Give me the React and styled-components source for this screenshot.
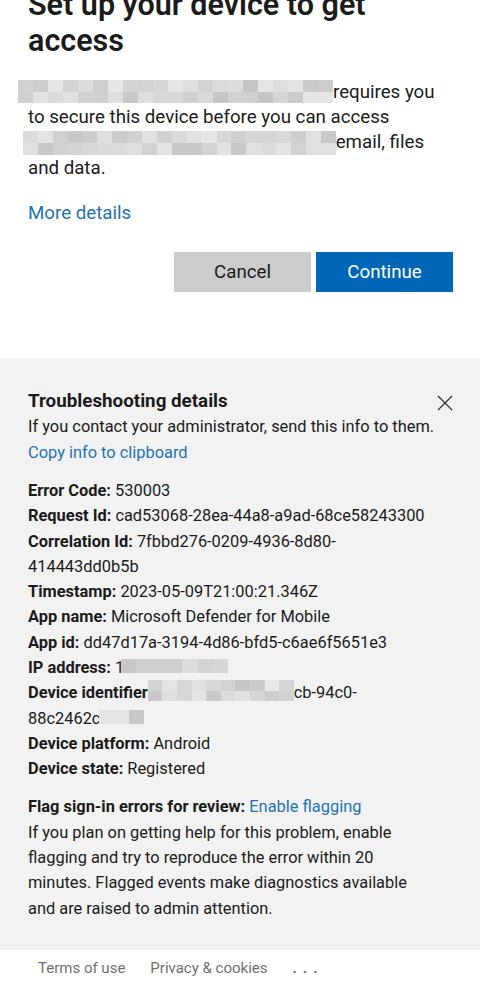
import styled, { createGlobalStyle } from "styled-components";

const GlobalStyle = createGlobalStyle`
  html, body {
    margin: 0;
    padding: 0;
    background: #ffffff;
  }
  body {
    font-family: Roboto, "Noto Sans", "Liberation Sans", sans-serif;
    color: #1b1b1b;
    -webkit-font-smoothing: antialiased;
  }
`;

// deterministic grey tones for the blurred (pixelated) parts of the shot
const tones = (count, seed) => {
  let s = seed;
  const out = [];
  for (let i = 0; i < count; i++) {
    s = (s * 9301 + 49297) % 233280;
    const v = 198 + Math.floor((s / 233280) * 34);
    out.push(`rgb(${v}, ${v}, ${v})`);
  }
  return out;
};

const Redacted = ({ cols, rows = 1, cell = 15, rowH = 14, align = "baseline", shift = 0, seed = 7 }) => (
  <Mosaic $cols={cols} $cell={cell} $rowH={rowH} $align={align} $shift={shift}>
    {tones(cols * rows, seed).map((c, i) => (
      <Tile key={i} $tone={c} />
    ))}
  </Mosaic>
);

const App = () => {
  return (
    <Page>
      <GlobalStyle />
      <Main>
        <Title>Set up your device to get access</Title>
        <Body>
          <Redacted cols={21} rows={2} rowH={11.5} align="top" shift={-10} seed={3} />
          requires you
          <br />
          to secure this device before you can access
          <br />
          <Redacted cols={21} rows={2} cell={14.9} rowH={12} align="text-top" shift={-5} seed={11} />
          email, files
          <br />
          and data.
        </Body>
        <MoreLink href="#">More details</MoreLink>
        <Actions>
          <Button>Cancel</Button>
          <Button $primary>Continue</Button>
        </Actions>
      </Main>

      <Panel>
        <PanelHeader>
          <PanelTitle>Troubleshooting details</PanelTitle>
          <Close aria-label="Close">
            <svg width="16" height="16" viewBox="0 0 16 16">
              <path d="M1 1L15 15M15 1L1 15" stroke="#333" strokeWidth="1.3" fill="none" />
            </svg>
          </Close>
        </PanelHeader>
        <Text>If you contact your administrator, send this info to them.</Text>
        <PanelLink href="#">Copy info to clipboard</PanelLink>

        <Details>
          <Text><b>Error Code:</b> 530003</Text>
          <Text><b>Request Id:</b> cad53068-28ea-44a8-a9ad-68ce58243300</Text>
          <Text>
            <b>Correlation Id:</b> 7fbbd276-0209-4936-8d80-
            <br />
            414443dd0b5b
          </Text>
          <Text><b>Timestamp:</b> 2023-05-09T21:00:21.346Z</Text>
          <Text><b>App name:</b> Microsoft Defender for Mobile</Text>
          <Text><b>App id:</b> dd47d17a-3194-4d86-bfd5-c6ae6f5651e3</Text>
          <Text>
            <b>IP address:</b> 1
            <Redacted cols={7} cell={15.3} rowH={14} shift={-3} seed={21} />
          </Text>
          <Text>
            <b>Device identifier</b>
            <Redacted cols={10} rows={2} cell={14.6} rowH={10.5} align="top" seed={5} />
            cb-94c0-
            <br />
            88c2462c
            <Redacted cols={3} cell={14.7} rowH={14} shift={-1} seed={17} />
          </Text>
          <Text><b>Device platform:</b> Android</Text>
          <Text><b>Device state:</b> Registered</Text>
        </Details>

        <Details>
          <Text>
            <b>Flag sign-in errors for review:</b> <InlineLink href="#">Enable flagging</InlineLink>
          </Text>
          <Text>
            If you plan on getting help for this problem, enable
            <br />
            flagging and try to reproduce the error within 20
            <br />
            minutes. Flagged events make diagnostics available
            <br />
            and are raised to admin attention.
          </Text>
        </Details>
      </Panel>

      <Footer>
        <FooterLink href="#">Terms of use</FooterLink>
        <FooterLink href="#">Privacy &amp; cookies</FooterLink>
        <Dots>...</Dots>
      </Footer>
    </Page>
  );
};

export default App;

const Page = styled.div`
  width: 480px;
  height: 981px;
  overflow: hidden;
  background: #ffffff;
`;

const Main = styled.div`
  margin-top: -13px;
  padding: 0 27px 0 28px;
`;

const Title = styled.h1`
  margin: 0;
  font-size: 30.5px;
  line-height: 36px;
  font-weight: 600;
  color: #1b1b1b;
`;

const Body = styled.p`
  margin: 21px 0 0;
  font-size: 18.7px;
  line-height: 25.2px;
  color: #1b1b1b;
`;

const Mosaic = styled.span`
  display: inline-grid;
  grid-template-columns: repeat(${(p) => p.$cols}, ${(p) => p.$cell}px);
  grid-auto-rows: ${(p) => p.$rowH}px;
  vertical-align: ${(p) => p.$align};
  margin-left: ${(p) => p.$shift}px;
`;

const Tile = styled.span`
  background: ${(p) => p.$tone};
`;

const MoreLink = styled.a`
  display: block;
  margin-top: 20px;
  font-size: 18.7px;
  line-height: 25.2px;
  color: #1f72b6;
  text-decoration: none;
`;

const Actions = styled.div`
  display: flex;
  justify-content: flex-end;
  gap: 5px;
  margin-top: 26px;
`;

const Button = styled.button`
  width: 137px;
  height: 40px;
  border: none;
  border-radius: 0;
  font-family: inherit;
  font-size: 18.7px;
  background: ${(p) => (p.$primary ? "#0067b8" : "#cccccc")};
  color: ${(p) => (p.$primary ? "#ffffff" : "#1b1b1b")};
  cursor: pointer;
`;

const Panel = styled.section`
  margin-top: 66px;
  background: #f2f2f2;
  padding: 31px 27px 29px 28px;
`;

const PanelHeader = styled.div`
  display: flex;
  justify-content: space-between;
  align-items: flex-start;
`;

const PanelTitle = styled.h2`
  margin: 0;
  font-size: 18.8px;
  line-height: 25.3px;
  font-weight: 700;
  color: #1b1b1b;
`;

const Close = styled.button`
  margin-top: 6px;
  width: 16px;
  height: 16px;
  padding: 0;
  border: none;
  background: transparent;
  display: flex;
  cursor: pointer;
`;

const Text = styled.div`
  font-size: 16.4px;
  line-height: 25.3px;
  color: #1b1b1b;
  white-space: nowrap;

  b {
    font-weight: 700;
  }
`;

const PanelLink = styled.a`
  display: block;
  font-size: 16.4px;
  line-height: 25.3px;
  color: #1f72b6;
  text-decoration: none;
`;

const InlineLink = styled.a`
  color: #1f72b6;
  text-decoration: none;
`;

const Details = styled.div`
  margin-top: 13px;
`;

const Footer = styled.footer`
  display: flex;
  gap: 25px;
  padding: 8px 0 0 38px;
  font-size: 15px;
  line-height: 20px;
`;

const FooterLink = styled.a`
  color: #707070;
  text-decoration: none;
`;

const Dots = styled.span`
  color: #707070;
  font-weight: 700;
  letter-spacing: 6px;
`;
